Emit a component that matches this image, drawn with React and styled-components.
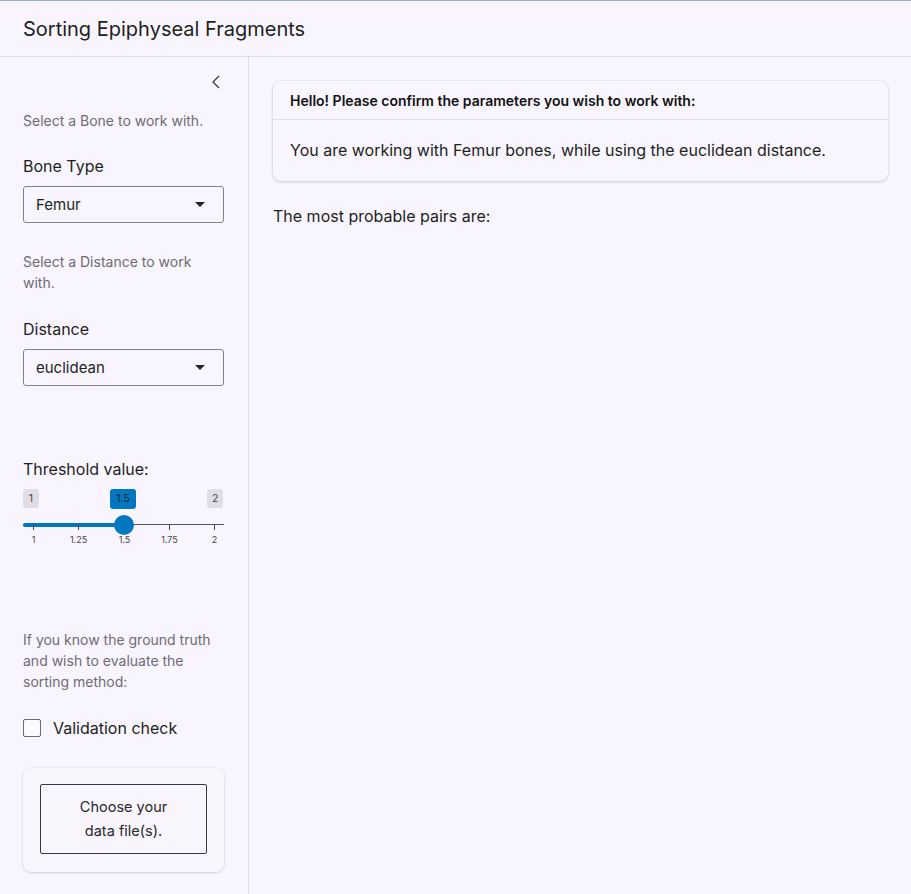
import React from "react";
import styled, { createGlobalStyle } from "styled-components";

const Global = createGlobalStyle`
  html, body { margin: 0; padding: 0; }
  body {
    background: #f9f5fe;
    font-family: Inter, "Noto Sans", sans-serif;
    color: #1d1f21;
  }
  * { box-sizing: border-box; }
`;

const Page = styled.div`
  width: 911px;
  height: 894px;
  display: flex;
  flex-direction: column;
  border-top: 1px solid #8eaee0;
  background: #f9f5fe;
  overflow: hidden;
`;

const Header = styled.header`
  height: 56px;
  flex: none;
  display: flex;
  align-items: center;
  padding: 0 23px;
  border-bottom: 1px solid #e0dde8;
  font-size: 20px;
  font-weight: 400;
  color: #1d1f21;
`;

const Body = styled.div`
  flex: 1;
  display: flex;
  min-height: 0;
`;

const Sidebar = styled.aside`
  width: 249px;
  flex: none;
  border-right: 1px solid #e0dde8;
  padding: 17px 24px 0 23px;
  display: flex;
  flex-direction: column;
`;

const Collapse = styled.div`
  display: flex;
  justify-content: flex-end;
  height: 24px;
  margin-right: 2px;
`;

const Help = styled.p`
  margin: ${(p) => p.$mt || 0}px 0 0;
  font-size: 14px;
  line-height: 21px;
  color: #6e6b74;
`;

const Label = styled.div`
  margin-top: ${(p) => p.$mt || 0}px;
  font-size: 16px;
  line-height: 20px;
  color: #1d1f21;
`;

const Select = styled.div`
  margin-top: 10px;
  height: 37px;
  width: 201px;
  border: 1px solid #85808c;
  border-radius: 3px;
  display: flex;
  align-items: center;
  justify-content: space-between;
  padding: 0 18px 0 12px;
  font-size: 15px;
  color: #1d1f21;
`;

const Caret = styled.span`
  width: 0;
  height: 0;
  border-left: 5px solid transparent;
  border-right: 5px solid transparent;
  border-top: 5px solid #222;
`;

const Slider = styled.div`
  position: relative;
  margin-top: 10px;
  height: 56px;
  width: 201px;
`;

const Badge = styled.div`
  position: absolute;
  top: 0;
  left: ${(p) => p.$x}px;
  height: ${(p) => (p.$active ? 20 : 19)}px;
  min-width: ${(p) => (p.$active ? 26 : 16)}px;
  text-align: center;
  padding: 0 ${(p) => (p.$active ? 6 : 5)}px;
  border-radius: 3px;
  font-size: 10.5px;
  line-height: ${(p) => (p.$active ? 20 : 19)}px;
  background: ${(p) => (p.$active ? "#0277bf" : "#e1dde6")};
  color: ${(p) => (p.$active ? "#1d1f21" : "#444")};
`;

const Track = styled.div`
  position: absolute;
  left: 0;
  right: 0;
  top: 35px;
  height: 1px;
  background: #555;
`;

const Fill = styled.div`
  position: absolute;
  left: 0;
  top: 34px;
  height: 4px;
  border-radius: 2px;
  background: #0277bf;
`;

const Thumb = styled.div`
  position: absolute;
  top: 26px;
  width: 20px;
  height: 20px;
  border-radius: 50%;
  background: #0277bf;
`;

const Tick = styled.div`
  position: absolute;
  top: 36px;
  width: 1px;
  height: 5px;
  background: #444;
`;

const TickLabel = styled.div`
  position: absolute;
  top: 45px;
  transform: translateX(-50%);
  font-size: 9px;
  color: #444;
  white-space: nowrap;
`;

const CheckRow = styled.label`
  margin-top: 26px;
  display: flex;
  align-items: center;
  gap: 12px;
  font-size: 16px;
  color: #1d1f21;
`;

const Box = styled.span`
  width: 18px;
  height: 18px;
  border: 1px solid #6f6a76;
  border-radius: 2px;
  background: #fbf8fe;
`;

const UploadCard = styled.div`
  margin-top: 30px;
  width: 201px;
  height: 104px;
  border-radius: 8px;
  background: #f8f5fc;
  box-shadow: 0 1px 3px rgba(0, 0, 0, 0.12), 0 0 0 1px rgba(0, 0, 0, 0.03);
  padding: 16px 17px;
`;

const UploadButton = styled.div`
  width: 167px;
  height: 70px;
  border: 1px solid #3a3740;
  border-radius: 2px;
  display: flex;
  align-items: center;
  justify-content: center;
  text-align: center;
  font-size: 14.5px;
  line-height: 24px;
  color: #2a272e;
`;

const Main = styled.main`
  flex: 1;
  padding: 24px 23px 0 24px;
`;

const Card = styled.section`
  border-radius: 8px;
  background: #f9f5fe;
  box-shadow: 0 1px 3px rgba(0, 0, 0, 0.14), 0 0 0 1px rgba(0, 0, 0, 0.04);
`;

const CardHeader = styled.div`
  height: 39px;
  display: flex;
  align-items: center;
  padding: 0 17px;
  border-bottom: 1px solid #e2dfe8;
  font-size: 14px;
  font-weight: 600;
  color: #111;
`;

const CardBody = styled.div`
  height: 61px;
  display: flex;
  align-items: center;
  padding: 0 17px 2px;
  font-size: 16px;
  color: #1d1f21;
`;

const Result = styled.p`
  margin: 25px 0 0 0;
  font-size: 16px;
  color: #1d1f21;
`;

const ticks = [
  { v: "1", x: 10 },
  { v: "1.25", x: 55 },
  { v: "1.5", x: 101 },
  { v: "1.75", x: 146 },
  { v: "2", x: 191 },
];

export default function App() {
  return (
    <>
      <Global />
      <Page>
        <Header>Sorting Epiphyseal Fragments</Header>
        <Body>
          <Sidebar>
            <Collapse>
              <svg width="12" height="16" viewBox="0 0 12 16">
                <path d="M9 2 L3 8 L9 14" fill="none" stroke="#333" strokeWidth="1.2" />
              </svg>
            </Collapse>
            <Help $mt={12}>Select a Bone to work with.</Help>
            <Label $mt={25}>Bone Type</Label>
            <Select>
              <span>Femur</span>
              <Caret />
            </Select>
            <Help $mt={28}>Select a Distance to work with.</Help>
            <Label $mt={26}>Distance</Label>
            <Select>
              <span>euclidean</span>
              <Caret />
            </Select>
            <Label $mt={73}>Threshold value:</Label>
            <Slider>
              <Badge $x={0}>1</Badge>
              <Badge $x={87} $active>1.5</Badge>
              <Badge $x={184}>2</Badge>
              <Track />
              <Fill style={{ width: 101 }} />
              {ticks.map((t) => (
                <React.Fragment key={t.v}>
                  <Tick style={{ left: t.x }} />
                  <TickLabel style={{ left: t.x + 0.5 }}>{t.v}</TickLabel>
                </React.Fragment>
              ))}
              <Thumb style={{ left: 91 }} />
            </Slider>
            <Help $mt={84}>
              If you know the ground truth and wish to evaluate the sorting method:
            </Help>
            <CheckRow>
              <Box />
              Validation check
            </CheckRow>
            <UploadCard>
              <UploadButton>
                Choose your
                <br />
                data file(s).
              </UploadButton>
            </UploadCard>
          </Sidebar>
          <Main>
            <Card>
              <CardHeader>Hello! Please confirm the parameters you wish to work with:</CardHeader>
              <CardBody>
                You are working with Femur bones, while using the euclidean distance.
              </CardBody>
            </Card>
            <Result>The most probable pairs are:</Result>
          </Main>
        </Body>
      </Page>
    </>
  );
}
